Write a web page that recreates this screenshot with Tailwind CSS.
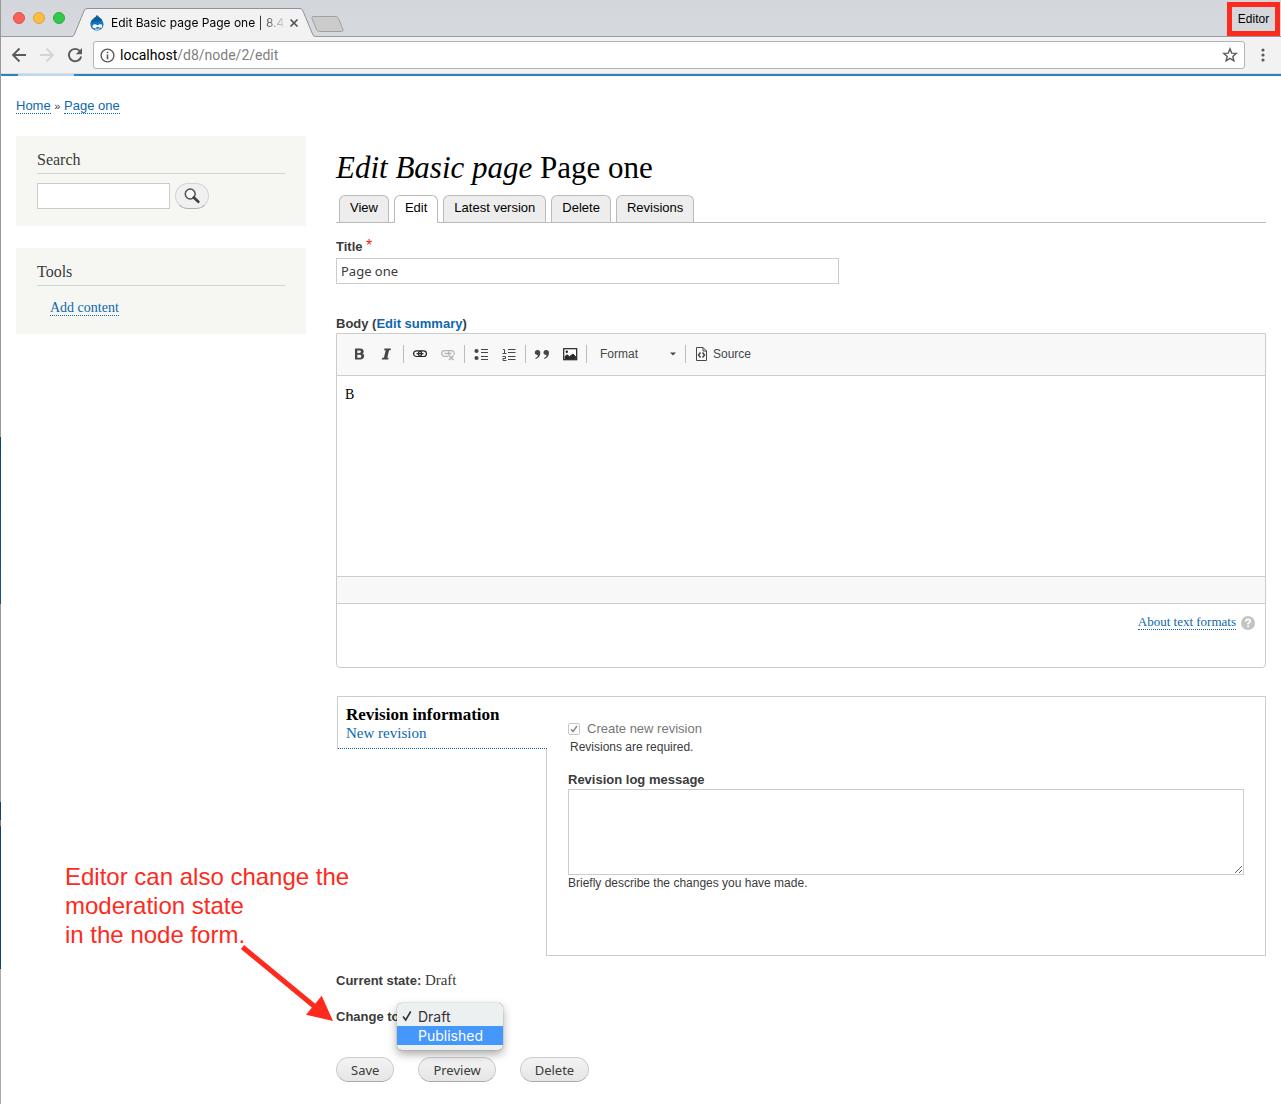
<!DOCTYPE html>
<html lang="en">
<head>
<meta charset="utf-8">
<meta name="viewport" content="width=device-width, initial-scale=1">
<title>Edit Basic page Page one | 8.4</title>
<script src="https://cdn.jsdelivr.net/npm/@tailwindcss/browser@4"></script>
</head>
<body class="min-h-screen flex bg-white text-[13px] leading-5 text-[#3b3b3b] font-['Liberation_Sans',Arial,sans-serif]">
<!-- sliver of the desktop left of the window -->
<div class="w-px shrink-0 bg-[linear-gradient(#999_437px,#11446a_437px,#1b5480_604px,#999_604px,#999_802px,#11446a_802px,#11446a_820px,#8b7a76_820px,#8b7a76_826px,#11446a_826px,#11446a_969px,#aaa_969px)]"></div>
<div class="relative flex-1 min-w-0">

  <!-- browser window -->
  <header>
    <div class="relative flex h-[37px] bg-linear-to-b from-[#d3d7dc] to-[#d6dade] border-b border-[#9a9ca0]">
      <div class="flex items-center gap-2 pl-3">
        <span class="size-3 rounded-full bg-[#fc605b] border border-[#e2514b]"></span>
        <span class="size-3 rounded-full bg-[#fdbd41] border border-[#e0a136]"></span>
        <span class="size-3 rounded-full bg-[#34c94a] border border-[#2aae3b]"></span>
      </div>
      <div class="relative w-[244px] h-[37px] ml-[7px] shrink-0">
        <svg class="absolute inset-0" width="244" height="37" viewBox="0 0 244 37" aria-hidden="true"><path d="M0 36.500 C1.500 36.500 2 35 2.500 34 L12 11 Q13 8.500 15 8.500 H228 Q230 8.500 231 11 L240.500 34 Q241.500 36.500 243.500 36.500 V37 H0 Z" fill="#f2f2f2"/><path d="M0 36.500 C1.500 36.500 2 35 2.500 34 L12 11 Q13 8.500 15 8.500 H228 Q230 8.500 231 11 L240.500 34 Q241.500 36.500 243.500 36.500" fill="none" stroke="#909296"/></svg>
        <div class="relative flex items-center h-7 mt-[9px] pl-[18px]">
          <svg width="14" height="16" viewBox="0 0 14 16" aria-hidden="true"><path d="M7 0 C8 2 13.500 4 13.500 9.500 C13.500 13 10.500 15.500 7 15.500 C3.500 15.500 .5 13 .5 9.500 C.5 4 6 3 7 0Z" fill="#1478be"/><path d="M7 0 C6 3 .5 4 .5 9.500 C3 4 10 9 12 4.500 C10 2.500 7.500 1.500 7 0Z" fill="#0d5f9c"/><path d="M2.500 11.500 C2.500 9 5.500 8.500 7.500 10.500 C9.500 8.700 12.300 8.800 12.300 11.200 C12.300 13.500 9.500 13 7.500 11.800 C5.500 13.500 2.500 13.800 2.500 11.500Z" fill="#fff"/><path d="M5 14 Q7.500 15 9.500 13.800" stroke="#fff" fill="none"/></svg>
          <span class="ml-[7px] w-[175px] shrink-0 whitespace-nowrap text-[12px] leading-4 text-black font-[Inter,sans-serif] mask-r-from-[145px] mask-r-to-[176px]">Edit Basic page Page one | 8.4.</span>
          <button type="button" aria-label="Close tab" class="ml-[3px]"><svg width="10" height="10" viewBox="0 0 10 10"><path d="M1.500 1.500 8.500 8.500M8.500 1.500 1.500 8.500" stroke="#505256" stroke-width="1.700"/></svg></button>
        </div>
      </div>
      <button type="button" aria-label="New tab" class="self-start mt-[15px] -ml-[6px]"><svg width="35" height="18" viewBox="0 0 35 18"><path d="M3 1.500 H25.500 Q27.500 1.500 28.500 3.500 L33 14.500 Q33.500 16.500 31.500 16.500 H9.500 Q7.500 16.500 6.500 14.500 L2 3.500 Q1.500 1.500 3 1.500Z" fill="#cbcbcb" stroke="#9fa1a3"/></svg></button>
      <button type="button" class="ml-auto mr-px mt-[2px] h-[34px] w-[53px] shrink-0 z-10 border-[5px] border-[#fe2a1d] text-[12px] leading-4 text-black">Editor</button>
    </div>
    <div class="flex items-center h-[37px] bg-[#f2f2f2] border-b border-[#dcdcdc] pl-[10px]">
      <button type="button" aria-label="Back"><svg width="16" height="16" viewBox="0 0 16 16"><path d="M15 8H2.500M8.500 1.500 2 8l6.500 6.500" fill="none" stroke="#5a5a5a" stroke-width="1.800"/></svg></button>
      <button type="button" aria-label="Forward" class="ml-3"><svg width="16" height="16" viewBox="0 0 16 16"><path d="M1 8h12.500M7.500 1.500 14 8l-6.500 6.500" fill="none" stroke="#d4d4d4" stroke-width="1.800"/></svg></button>
      <button type="button" aria-label="Reload" class="ml-3"><svg width="16" height="16" viewBox="0 0 16 16"><path d="M13 4.200A6.200 6.200 0 1 0 14.200 9.500" fill="none" stroke="#5a5a5a" stroke-width="1.900"/><path d="M15 1v6.200H8.800Z" fill="#5a5a5a"/></svg></button>
      <div class="relative flex flex-1 items-center h-7 ml-[10px] pl-[6px] pr-[6px] bg-white border border-[#b4b4b4] rounded-[3px]">
        <svg width="15" height="15" viewBox="0 0 15 15" aria-hidden="true"><circle cx="7.500" cy="7.500" r="6.400" fill="none" stroke="#5a5a5a" stroke-width="1.400"/><path d="M7.500 6.500v4.800M7.500 3.700v1.600" stroke="#5a5a5a" stroke-width="1.600"/></svg>
        <div class="flex-1 ml-[5px] text-[14px] text-[#808080] font-[Roboto,sans-serif]"><span class="text-black">localhost</span>/d8/node/2/edit</div>
        <button type="button" aria-label="Bookmark this page"><svg width="16" height="16" viewBox="0 0 16 16"><path d="M8 1.800 9.700 6.100 14.300 6.400 10.800 9.400 11.900 13.800 8 11.400 4.100 13.800 5.200 9.400 1.700 6.400 6.300 6.100Z" fill="none" stroke="#5a5a5a" stroke-width="1.400"/></svg></button>
      </div>
      <button type="button" aria-label="Menu" class="ml-4 mr-4"><svg width="4" height="16" viewBox="0 0 4 16" fill="#5a5a5a"><circle cx="2" cy="3" r="1.600"/><circle cx="2" cy="8" r="1.600"/><circle cx="2" cy="13" r="1.600"/></svg></button>
    </div>
    <div class="h-[2px] bg-[#2883be] pl-[17px]"><div class="h-[2px] w-14 bg-[#bcd7ec]"></div></div>
  </header>

  <nav aria-label="Breadcrumb" class="pl-[15px] pt-[22px] leading-4">
    <a href="#" class="text-[#0e67ad] border-b border-dotted border-[#0e67ad]">Home</a>
    <span class="text-[11px]">»</span>
    <a href="#" class="text-[#0e67ad] border-b border-dotted border-[#0e67ad]">Page one</a>
  </nav>

  <div class="flex items-start gap-[30px] pl-[15px] pr-[15px] pt-[22px] pb-[22px]">
    <aside class="w-[290px] shrink-0 flex flex-col gap-[22px] font-['Liberation_Serif',Georgia,serif]">
      <section class="bg-[#f6f6f2] px-[21px] pt-[14px] pb-[17px]">
        <h2 class="text-[16px] leading-5 pb-[3px] border-b border-[#d3d5d0]">Search</h2>
        <form class="flex items-center gap-[5px] pt-[9px]">
          <input type="search" aria-label="Search" class="w-[133px] h-[26px] bg-white border border-[#ccc]">
          <button type="button" aria-label="Search" class="flex items-center justify-center w-[34px] h-[26px] rounded-full bg-[#f0f0f0] border border-[#d4d4d4] border-b-[#b0b0b0]"><svg width="16" height="16" viewBox="0 0 16 16"><circle cx="6.200" cy="6" r="4.900" fill="#f8f8f8" stroke="#505050" stroke-width="1.500"/><path d="M9.800 9.500 14.300 13.800" stroke="#404040" stroke-width="2.600" stroke-linecap="round"/></svg></button>
        </form>
      </section>
      <section class="bg-[#f6f6f2] px-[21px] pt-[14px] pb-[16px]">
        <h2 class="text-[16px] leading-5 pb-[3px] border-b border-[#d3d5d0]">Tools</h2>
        <p class="pt-[12px] pl-[13px] text-[14px]"><a href="#" class="text-[#0e67ad] border-b border-dotted border-[#0e67ad]">Add content</a></p>
      </section>
    </aside>

    <main class="flex-1 min-w-0">
      <h1 class="pt-[14px] pb-[9px] text-[31px] leading-9 text-black font-['Liberation_Serif',Georgia,serif]"><em>Edit Basic page</em> Page one</h1>
      <ul class="flex gap-[5px] h-7 pl-[3px] border-b border-[#bbb] text-black">
        <li class="h-[27px] px-[10px] pt-[2px] bg-[#ededed] border border-b-0 border-[#bbb] rounded-t-[6px]"><a href="#">View</a></li>
        <li class="h-7 px-[10px] pt-[2px] bg-white border border-b-0 border-[#bbb] rounded-t-[6px]"><a href="#" aria-current="page">Edit</a></li>
        <li class="h-[27px] px-[10px] pt-[2px] bg-[#ededed] border border-b-0 border-[#bbb] rounded-t-[6px]"><a href="#">Latest version</a></li>
        <li class="h-[27px] px-[10px] pt-[2px] bg-[#ededed] border border-b-0 border-[#bbb] rounded-t-[6px]"><a href="#">Delete</a></li>
        <li class="h-[27px] px-[10px] pt-[2px] bg-[#ededed] border border-b-0 border-[#bbb] rounded-t-[6px]"><a href="#">Revisions</a></li>
      </ul>

      <form>
        <label for="title" class="block mt-[14px] h-[18px] leading-[18px] font-bold">Title <span class="text-[#ee1c25] text-[16px] font-normal">*</span></label>
        <input id="title" type="text" value="Page one" class="block mt-[3px] w-[503px] h-[26px] px-1 border border-[#ccc] bg-white font-['Noto_Sans',sans-serif]">

        <div class="mt-[31px] leading-[18px] font-bold"><label for="body">Body</label> (<a href="#" class="text-[#0e67ad]">Edit summary</a>)</div>
        <div class="border border-[#ccc] rounded-b-[4px]">
          <div class="flex items-center h-[42px] pl-2 pb-[2px] bg-[#f8f8f8] border-b border-[#ccc] text-[12px]">
            <button type="button" aria-label="Bold" class="w-7 flex justify-center"><svg width="16" height="16" viewBox="0 0 16 16"><path fill-rule="evenodd" d="M4 2.500h5c2.500 0 3.700 1 3.700 2.900 0 1.100-.6 1.900-1.600 2.200 1.300.3 2 1.200 2 2.400 0 2.100-1.400 3.500-3.900 3.500H4ZM6.300 4.400v2.500h2c1.100 0 1.700-.4 1.700-1.300s-.6-1.200-1.700-1.200ZM6.300 8.700v3h2.200c1.200 0 1.800-.5 1.800-1.500s-.6-1.500-1.800-1.500Z" fill="#474747"/></svg></button>
            <button type="button" aria-label="Italic" class="w-7 flex justify-center"><svg width="16" height="16" viewBox="0 0 16 16"><path d="M5.500 2.500h6.500l-.4 1.700h-1.500L8.300 11.800H9.600L9.200 13.500H2.800l.4-1.700h1.700L6.700 4.200H5.100Z" fill="#474747"/></svg></button>
            <span class="w-px h-[18px] mx-[2px] bg-[#bcbcbc]"></span>
            <button type="button" aria-label="Link" class="w-7 flex justify-center"><svg width="16" height="16" viewBox="0 0 16 16" fill="none" stroke="#222" stroke-width="1.200"><rect x="1.600" y="4.900" width="8" height="5.600" rx="2.800"/><rect x="6.400" y="4.900" width="8" height="5.600" rx="2.800"/><path d="M4.500 7.700h7"/></svg></button>
            <button type="button" aria-label="Unlink" disabled class="w-7 flex justify-center"><svg width="16" height="16" viewBox="0 0 16 16" fill="none" stroke="#b5b5b5" stroke-width="1.300"><path d="M8 10.300H4.500a2.700 2.700 0 0 1 0-5.600h3.800M7 4.700h4.500a2.800 2.800 0 0 1 2.500 4M4.500 7.500h7M8.500 5.500q1.500 2 0 4"/><path d="M9 9.500l4.500 4.500M13.500 9.500 9 14" stroke-width="1.600"/></svg></button>
            <span class="w-px h-[18px] mx-[2px] bg-[#bcbcbc]"></span>
            <button type="button" aria-label="Bulleted list" class="w-7 flex justify-center"><svg width="16" height="16" viewBox="0 0 16 16"><circle cx="3.500" cy="5" r="2.100" fill="#474747"/><circle cx="3.500" cy="12" r="2.100" fill="#474747"/><path d="M8 3.500h7M8 6.500h7M8 10.500h7M8 13.500h7" stroke="#474747"/></svg></button>
            <button type="button" aria-label="Numbered list" class="w-7 flex justify-center"><svg width="16" height="16" viewBox="0 0 16 16" fill="none" stroke="#474747"><path d="M2 3.500h1.500V7.500M1.500 7.500h4M1.500 10.500h3v2h-2.500v2h3.500M7 3.500h7.500M7 6.500h7.500M7 10.500h7.500M7 13.500h7.500"/></svg></button>
            <span class="w-px h-[18px] mx-[2px] bg-[#bcbcbc]"></span>
            <button type="button" aria-label="Block quote" class="w-7 flex justify-center"><svg width="16" height="16" viewBox="0 0 16 16" fill="#474747"><path d="M3.500 4A2.500 2.500 0 0 1 6.300 6.800C6.300 10 4.500 12 1.800 12.900L1.300 12C3 11.200 3.900 10 3.900 8.900A2.500 2.500 0 1 1 3.500 4Z"/><path d="M12.200 4A2.500 2.500 0 0 1 15 6.800C15 10 13.200 12 10.500 12.900L10 12C11.700 11.200 12.600 10 12.600 8.900A2.500 2.500 0 1 1 12.200 4Z"/></svg></button>
            <button type="button" aria-label="Image" class="w-7 flex justify-center"><svg width="16" height="16" viewBox="0 0 16 16"><rect x="1.700" y="2.700" width="13" height="11" fill="#fff" stroke="#222" stroke-width="1.200"/><path d="M3 12.500V10.500L5 8.700l2.500 2L11 8l2.500 2.500v2Z" fill="#2a2a2a" stroke="#2a2a2a"/><circle cx="4.800" cy="5.700" r="1.200" fill="#222"/></svg></button>
            <span class="w-px h-[18px] mx-[2px] bg-[#bcbcbc]"></span>
            <div class="relative flex items-center">
              <select aria-label="Paragraph format" class="appearance-none w-[94px] h-7 pl-[11px] bg-transparent text-[#474747]"><option>Format</option></select>
              <svg class="absolute right-[7px] pointer-events-none" width="6" height="4" viewBox="0 0 6 4" aria-hidden="true"><path d="M0 .5h6L3 3.500Z" fill="#474747"/></svg>
            </div>
            <span class="w-px h-[18px] mx-[2px] bg-[#bcbcbc]"></span>
            <button type="button" class="flex items-center gap-1 pl-[6px] text-[#474747]"><svg width="15" height="16" viewBox="0 0 15 16" fill="none" stroke="#474747" aria-hidden="true"><path d="M2.500 1.500H9L12.500 5V14.500H2.500ZM9 1.500V5H12.500"/><path d="M6.500 6.500 4.500 9l2 2.500M8.500 6.500l2 2.500-2 2.500" stroke-width="1.500"/></svg>Source</button>
          </div>
          <textarea id="body" class="block w-full h-[200px] px-2 pt-[9px] resize-none outline-none text-[14px] text-black font-['Liberation_Serif',Georgia,serif]">B</textarea>
          <div class="h-7 bg-[#f8f8f8] border-y border-[#ccc]"></div>
          <div class="flex items-start justify-end gap-[5px] h-[63px] pt-[10px] pr-[10px] font-['Liberation_Serif',Georgia,serif]">
            <a href="#" class="text-[13px] leading-[15px] text-[#0e67ad] border-b border-dotted border-[#0e67ad]">About text formats</a>
            <svg class="mt-[2px]" width="14" height="14" viewBox="0 0 14 14" aria-hidden="true"><circle cx="7" cy="7" r="7" fill="#c4c4c4"/><path d="M4.800 5.400Q4.800 3.300 7 3.300T9.200 5.300Q9.200 6.500 7.100 7.500V8.500M7.100 9.600v1.700" fill="none" stroke="#fff" stroke-width="1.700"/></svg>
          </div>
        </div>

        <div class="flex mt-7 min-h-[260px] border-t border-r border-[#ccc] ml-px">
          <div class="w-[210px] shrink-0 flex flex-col">
            <div class="border-l border-[#ccc]">
              <a href="#revision" class="block h-[52px] pl-2 pt-2 border-b border-dotted border-[#0e67ad] text-[15px] leading-[19px] text-[#0e67ad] font-['Liberation_Serif',Georgia,serif]"><strong class="block text-[17px] text-black">Revision information</strong>New revision</a>
            </div>
            <div class="flex-1 border-r border-[#ccc]"></div>
          </div>
          <div id="revision" class="flex-1 min-w-0 border-b border-[#ccc] pl-[21px] pr-[21px] pt-[22px]">
            <div class="flex items-center text-[#777]">
              <span class="relative flex mr-[7px]">
                <input id="new-revision" type="checkbox" checked disabled class="appearance-none size-3 rounded-[2px] border border-[#c8c8c8] bg-[#fdfdfd]">
                <svg class="absolute inset-0 pointer-events-none" width="12" height="12" viewBox="0 0 12 12" aria-hidden="true"><path d="M3 6.300 5 8.500 9 3" fill="none" stroke="#8c8c8c" stroke-width="1.500"/></svg>
              </span>
              <label for="new-revision">Create new revision</label>
            </div>
            <p class="text-[12px] leading-4 pl-[2px]">Revisions are required.</p>
            <label for="log" class="block mt-4 leading-[18px] font-bold">Revision log message</label>
            <textarea id="log" class="block w-full h-[86px] border border-[#ccc] bg-white resize-y"></textarea>
            <p class="text-[12px] leading-4">Briefly describe the changes you have made.</p>
          </div>
        </div>

        <p class="mt-[14px]"><strong>Current state:</strong> <span class="text-[15px] font-['Liberation_Serif',Georgia,serif]">Draft</span></p>
        <div class="relative flex items-center mt-4 h-5">
          <label for="state" class="w-[64px] shrink-0 font-bold whitespace-nowrap">Change to</label>
          <select id="state" class="w-[90px] h-5 border border-[#ccc] rounded text-[13px] appearance-none"><option>Draft</option><option>Published</option></select>
          <ul role="listbox" aria-label="Change to" class="absolute left-[61px] -top-1 w-[106px] h-[47px] pt-1 bg-[#ecf0f1] rounded-[5px] shadow-[0_4px_10px_rgba(0,0,0,0.35),0_0_1px_rgba(0,0,0,0.5)] text-[14px] leading-[19px] text-[#333] font-[Inter,sans-serif]">
            <li role="option" aria-selected="true" class="flex"><svg class="ml-[5px] mr-[6px] mt-[3px]" width="10" height="12" viewBox="0 0 10 12" aria-hidden="true"><path d="M1 6.500 3.700 10 8.700 1.500" fill="none" stroke="#333" stroke-width="1.600"/></svg>Draft</li>
            <li role="option" aria-selected="false" class="pl-[21px] bg-[#4497fb] text-white">Published</li>
          </ul>
        </div>
        <div class="flex gap-6 mt-[30px] font-['Noto_Sans',sans-serif]">
          <button type="button" class="h-[25px] px-[14px] rounded-full border border-[#ccc] border-b-[#a8a8a8] bg-linear-to-b from-[#f3f3f3] to-[#e6e6e6]">Save</button>
          <button type="button" class="h-[25px] px-[14px] rounded-full border border-[#ccc] border-b-[#a8a8a8] bg-linear-to-b from-[#f3f3f3] to-[#e6e6e6]">Preview</button>
          <button type="button" class="h-[25px] px-[14px] rounded-full border border-[#ccc] border-b-[#a8a8a8] bg-linear-to-b from-[#f3f3f3] to-[#e6e6e6]">Delete</button>
        </div>
      </form>
    </main>
  </div>

  <!-- annotation laid over the page -->
  <p class="absolute left-16 top-[862px] text-[24px] leading-[29px] text-[#fe2a1d] whitespace-nowrap">Editor can also change the<br>moderation state<br>in the node form.</p>
  <svg class="absolute left-[239px] top-[944px]" width="94" height="79" viewBox="240 944 94 79" aria-hidden="true"><path d="M242.500 947 314 1006" stroke="#fe2a1d" stroke-width="5"/><path d="M333 1021 321.700 995.700 306 1014.700Z" fill="#fe2a1d"/></svg>
</div>
</body>
</html>
